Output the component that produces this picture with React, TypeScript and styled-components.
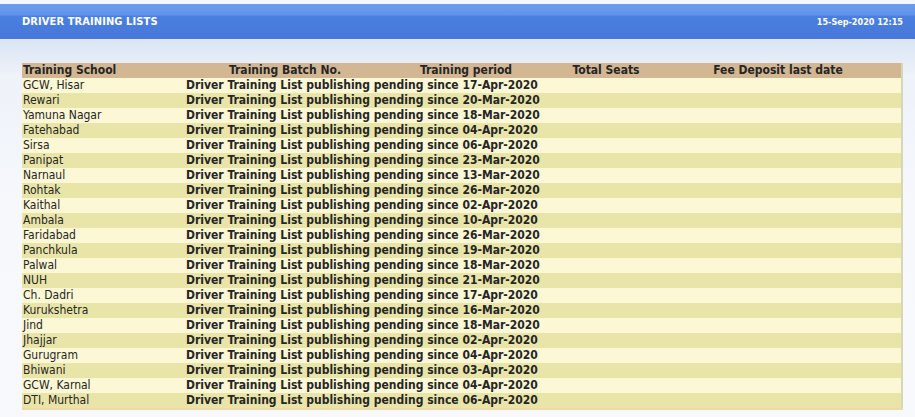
import styled, { createGlobalStyle } from 'styled-components';

const GlobalStyle = createGlobalStyle`
  html, body {
    margin: 0;
    padding: 0;
    background: #ffffff;
  }
`;

const Page = styled.div`
  width: 915px;
  height: 417px;
  overflow: hidden;
  padding-top: 4px;
  box-sizing: border-box;
  background: linear-gradient(180deg, #f3f6fb 0px, #f3f6fb 4px, #dbe5f4 40px, #eef2f9 75px, #f6f8fc 200px, #f8f9fc 100%);
  font-family: "DejaVu Sans Condensed", "DejaVu Sans", sans-serif;
`;

const TopBar = styled.div`
  height: 35px;
  display: flex;
  align-items: center;
  justify-content: space-between;
  padding: 0 12px 0 22px;
  background: linear-gradient(180deg, #6d9ced 0%, #6194ea 30%, #4b7fdf 35%, #4678da 100%);
  color: #ffffff;
  font-weight: bold;
`;

const Title = styled.div`
  font-size: 11px;
  letter-spacing: 0.1px;
`;

const Stamp = styled.div`
  font-size: 9px;
`;

const Content = styled.div`
  padding: 24px 13px 0 22px;
`;

const Table = styled.table`
  width: 880px;
  border-collapse: collapse;
  table-layout: fixed;
  font-size: 12px;
  color: #262626;
  border-right: 2px solid #d6d6b8;
  border-bottom: 2px solid #f0d9a8;
`;

const HeadRow = styled.tr`
  height: 15px;
  background: #d3b792;
`;

const Th = styled.th<{ $align?: string; $padRight?: number }>`
  padding: 0 ${p => p.$padRight ?? 1}px 0 1px;
  font-weight: bold;
  text-align: ${p => p.$align || 'center'};
  line-height: 15px;
  white-space: nowrap;
`;

const Row = styled.tr<{ $odd: boolean }>`
  height: 15px;
  background: ${p => (p.$odd ? '#e9e5a8' : '#fcf7d4')};
`;

const Td = styled.td<{ $bold?: boolean }>`
  padding: 0 1px;
  line-height: 15px;
  white-space: nowrap;
  overflow: visible;
  font-weight: ${p => (p.$bold ? 'bold' : 'normal')};
`;

const rows: [string, string][] = [
  ['GCW, Hisar', '17-Apr-2020'],
  ['Rewari', '20-Mar-2020'],
  ['Yamuna Nagar', '18-Mar-2020'],
  ['Fatehabad', '04-Apr-2020'],
  ['Sirsa', '06-Apr-2020'],
  ['Panipat', '23-Mar-2020'],
  ['Narnaul', '13-Mar-2020'],
  ['Rohtak', '26-Mar-2020'],
  ['Kaithal', '02-Apr-2020'],
  ['Ambala', '10-Apr-2020'],
  ['Faridabad', '26-Mar-2020'],
  ['Panchkula', '19-Mar-2020'],
  ['Palwal', '18-Mar-2020'],
  ['NUH', '21-Mar-2020'],
  ['Ch. Dadri', '17-Apr-2020'],
  ['Kurukshetra', '16-Mar-2020'],
  ['Jind', '18-Mar-2020'],
  ['Jhajjar', '02-Apr-2020'],
  ['Gurugram', '04-Apr-2020'],
  ['Bhiwani', '03-Apr-2020'],
  ['GCW, Karnal', '04-Apr-2020'],
  ['DTI, Murthal', '06-Apr-2020'],
];

const App = () => {
  return (
    <Page>
      <GlobalStyle />
      <TopBar>
        <Title>DRIVER TRAINING LISTS</Title>
        <Stamp>15-Sep-2020 12:15</Stamp>
      </TopBar>
      <Content>
        <Table>
          <colgroup>
            <col style={{ width: 163 }} />
            <col style={{ width: 200 }} />
            <col style={{ width: 162 }} />
            <col style={{ width: 118 }} />
            <col style={{ width: 237 }} />
          </colgroup>
          <thead>
            <HeadRow>
              <Th $align="left">Training School</Th>
              <Th>Training Batch No.</Th>
              <Th>Training period</Th>
              <Th>Total Seats</Th>
              <Th $padRight={11}>Fee Deposit last date</Th>
            </HeadRow>
          </thead>
          <tbody>
            {rows.map(([school, since], i) => (
              <Row key={school} $odd={i % 2 === 1}>
                <Td>{school}</Td>
                <Td $bold colSpan={2}>Driver Training List publishing pending since {since}</Td>
                <Td />
                <Td />
              </Row>
            ))}
          </tbody>
        </Table>
      </Content>
    </Page>
  );
};

export default App;
